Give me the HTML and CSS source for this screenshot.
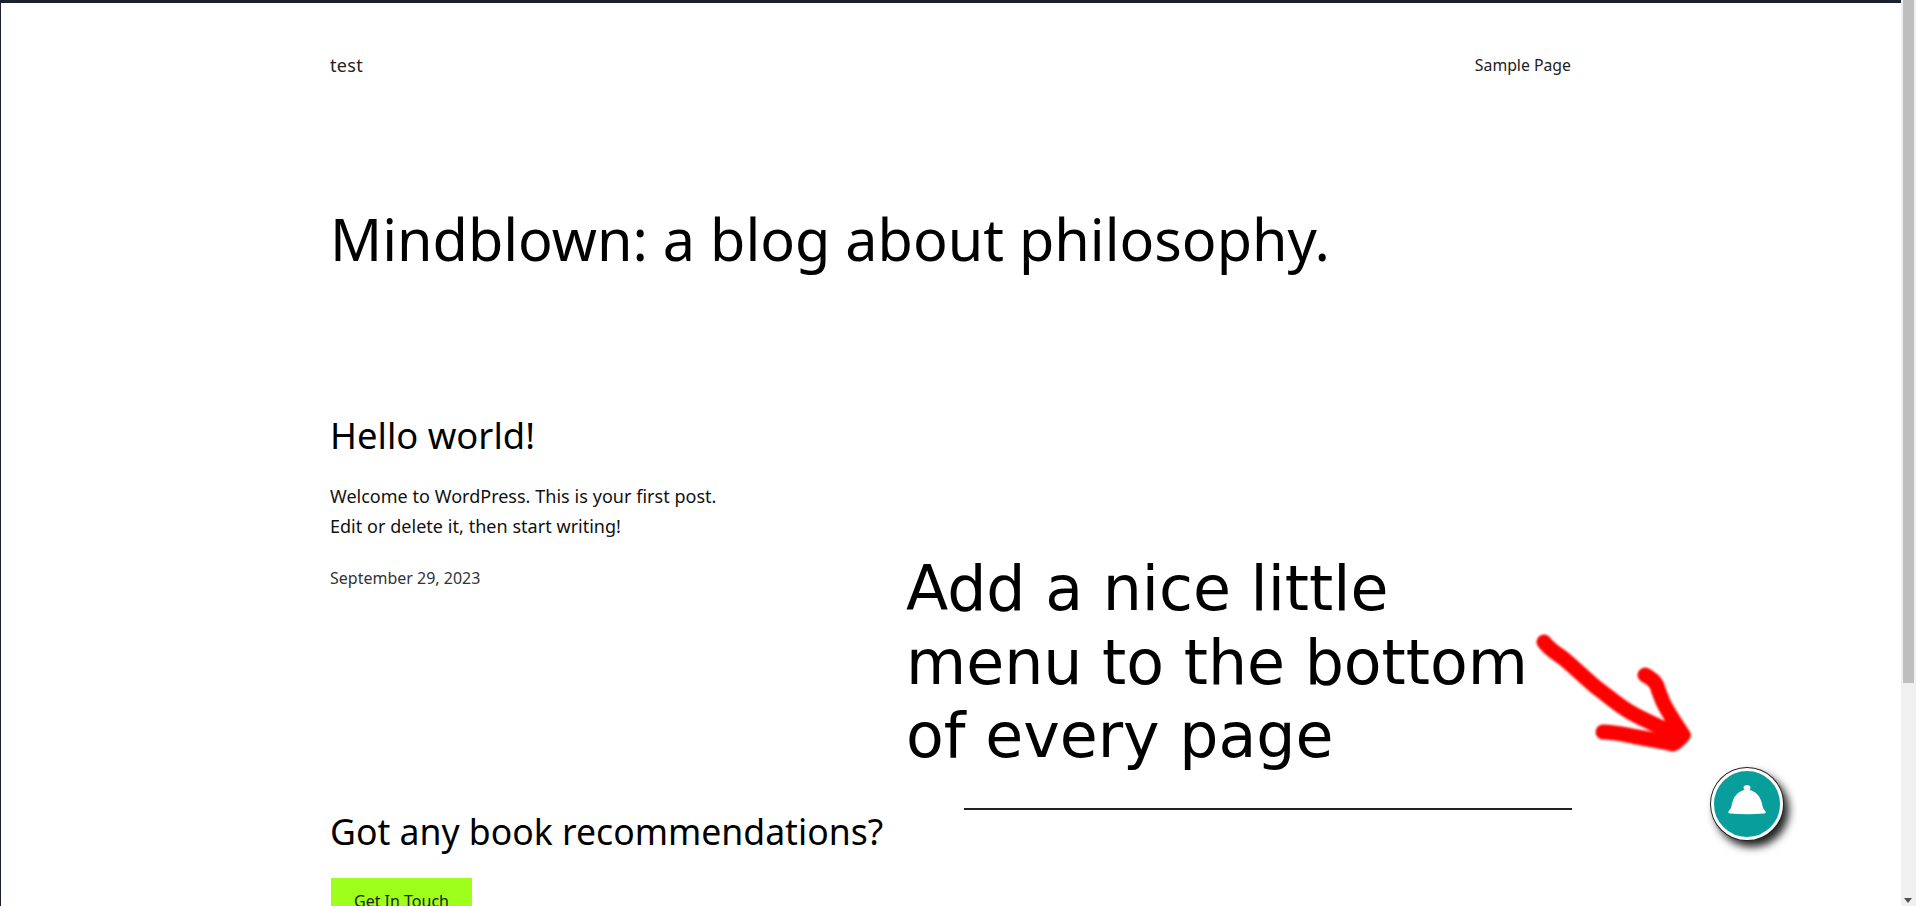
FILE: index.html
```html
<!DOCTYPE html>
<html lang="en">
<head>
<meta charset="utf-8">
<title>Mindblown: a blog about philosophy.</title>
<link rel="stylesheet" href="styles.css">
</head>
<body>
<div class="shell">
  <main class="page">
    <header class="site-header">
      <a class="site-title">test</a>
      <a class="nav-link">Sample Page</a>
    </header>
    <h1 class="blog-title">Mindblown: a blog about philosophy.</h1>
    <article class="post">
      <h2 class="post-title">Hello world!</h2>
      <p class="post-text">Welcome to WordPress. This is your first post.<br>Edit or delete it, then start writing!</p>
      <p class="post-date">September 29, 2023</p>
    </article>
    <section class="cta">
      <h2 class="cta-title">Got any book recommendations?</h2>
      <a class="cta-button">Get In Touch</a>
    </section>
  </main>
  <div class="scrollbar">
    <div class="scroll-thumb"></div>
    <svg class="scroll-arrow" viewBox="0 0 8 5" aria-hidden="true"><path d="M0 0h8L4 5z"/></svg>
  </div>
  <p class="note">Add a nice little menu to the bottom of every page</p>
  <hr class="rule">
  <svg class="arrow" viewBox="0 0 190 140" aria-hidden="true">
    <path d="M24 22C30 30 36 33 43 38C55 48 66 59 77 68C88 76 98 85 110 92C120 98 130 102 140 107C148 110 156 112 163 115"/>
    <path d="M125 55C131 58 135 61 137 66C139 72 141 78 144 84C149 94 156 104 163 115"/>
    <path d="M83 112C95 112 106 115 117 117C129 119 141 121 153 124C157 122 160 119 163 115"/>
  </svg>
  <button class="fab" type="button" aria-label="Menu">
    <svg class="fab-icon" viewBox="0 0 38 32" aria-hidden="true">
      <path d="M15.500 2.500C15.500 1 17 0 19 0S22.500 1 22.500 2.500C22.500 3.600 22 4.300 21.200 4.900C28 6 33 11.500 34.500 21C35 23.500 36.500 25 37.500 26.500C38 27.500 37.500 28.500 36 28.600C25 29.600 13 29.600 2 28.600C.5 28.500 0 27.500 .5 26.500C1.500 25 3 23.500 3.500 21C5 11.500 10 6 16.800 4.900C16 4.300 15.500 3.600 15.500 2.500Z"/>
    </svg>
  </button>
</div>
</body>
</html>
```
FILE: styles.css
```css
* { box-sizing: border-box; }
html, body { margin: 0; height: 100%; overflow: hidden; background: #fff; }
body { font-family: "Noto Sans", "Open Sans", sans-serif; color: #000; }
.shell {
  position: relative;
  display: flex;
  width: 1920px;
  height: 906px;
  overflow: hidden;
}
.page {
  width: 1901px;
  height: 906px;
  flex: none;
  border-top: 3px solid #1b2130;
  border-left: 1px solid #1b2130;
  padding: 0 330px 0 329px;
  overflow: hidden;
}
.site-header {
  display: flex;
  justify-content: space-between;
  align-items: center;
  height: 25px;
  margin-top: 49px;
}
.site-title { font-size: 18px; letter-spacing: 0.3px; color: #222; }
.nav-link { font-size: 15.800px; color: #222; }
.blog-title {
  margin: 126px 0 0;
  font-size: 57.500px;
  line-height: 72px;
  font-weight: 400;
}
.post { margin-top: 137px; }
.post-title {
  margin: 0;
  font-size: 36.400px;
  line-height: 46px;
  font-weight: 400;
}
.post-text {
  margin: 23px 0 0;
  font-size: 18px;
  line-height: 30px;
  word-spacing: 0.2px;
  color: #111;
}
.post-date {
  margin: 26px 0 0;
  font-size: 16px;
  line-height: 22px;
  color: #333;
}
.cta { margin-top: 219px; }
.cta-title {
  margin: 0;
  font-size: 35.600px;
  line-height: 46px;
  font-weight: 400;
}
.cta-button {
  display: block;
  width: 141px;
  height: 60px;
  margin: 24px 0 0 1px;
  padding-top: 11px;
  background: #9dff1a;
  font-size: 16px;
  line-height: 24px;
  text-align: center;
  color: #222;
}
.scrollbar {
  position: relative;
  width: 15px;
  height: 906px;
  flex: none;
  background: #f0f0f0;
  padding: 0 2px;
}
.scroll-thumb { height: 683px; background: #bebebe; }
.scroll-arrow {
  position: absolute;
  left: 3px;
  bottom: 3px;
  width: 8px;
  height: 5px;
  fill: #505050;
}
.note {
  position: absolute;
  left: 906px;
  top: 553px;
  width: 640px;
  margin: 0;
  font-family: "DejaVu Sans", sans-serif;
  font-size: 61.750px;
  line-height: 73.500px;
  color: #000;
}
.rule {
  position: absolute;
  left: 964px;
  top: 808px;
  width: 608px;
  height: 2px;
  margin: 0;
  border: 0;
  background: #222;
}
.arrow {
  position: absolute;
  left: 1520px;
  top: 620px;
  width: 190px;
  height: 140px;
  fill: none;
  stroke: #ff0000;
  stroke-width: 15;
  stroke-linecap: round;
  stroke-linejoin: round;
  filter: blur(1.200px);
}
.fab {
  position: absolute;
  left: 1711px;
  top: 768px;
  display: flex;
  align-items: center;
  justify-content: center;
  width: 72px;
  height: 72px;
  padding: 0 0 6px;
  border: 3px solid #fff;
  border-radius: 50%;
  background: #089e9c;
  box-shadow: 0 0 0 1px #222, 5px 6px 9px 1px #222;
}
.fab-icon { width: 38px; height: 32px; flex: none; fill: #fff; }
```
